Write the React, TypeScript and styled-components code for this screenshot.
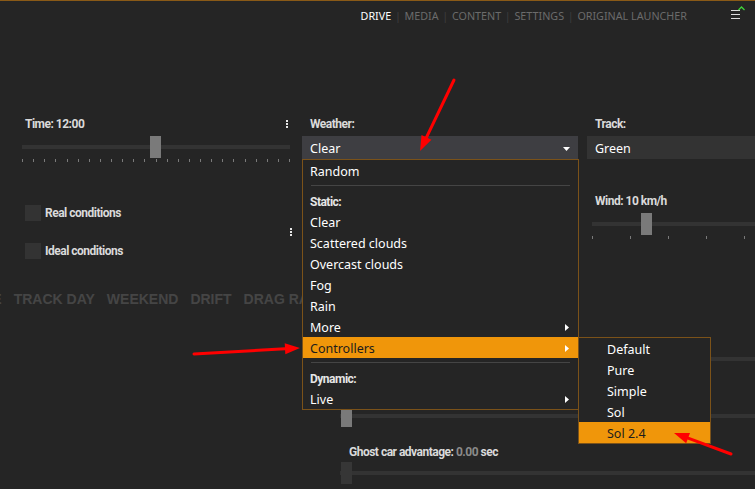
import React from "react";
import styled, { createGlobalStyle } from "styled-components";

const GlobalStyle = createGlobalStyle`
  html, body {
    margin: 0;
    padding: 0;
    background: #252525;
  }
  body {
    font-family: "Noto Sans", "Open Sans", sans-serif;
    color: #fff;
    overflow: hidden;
  }
`;

const Page = styled.div`
  position: relative;
  width: 755px;
  height: 489px;
  overflow: hidden;
  background: #252525;
  border-top: 1px solid #8a5a17;
  box-sizing: border-box;
`;

const TopBar = styled.header`
  display: flex;
  align-items: center;
  justify-content: flex-end;
  height: 30px;
  padding-right: 10px;
`;

const Nav = styled.nav`
  display: flex;
  align-items: center;
  gap: 3.7px;
  font-family: "Noto Sans", sans-serif;
  font-size: 10.75px;
  text-transform: uppercase;
`;

const NavItem = styled.span<{ $active?: boolean }>`
  color: ${p => (p.$active ? "#ffffff" : "#6b6b6b")};
`;

const NavSep = styled.span`
  color: #3e3e3e;
`;

const MenuIcon = styled.svg`
  margin-left: 44px;
  display: block;
`;

const TopSection = styled.section`
  display: grid;
  grid-template-columns: 280px 285px 1fr;
  padding: 81px 0 0 22px;
`;

const Column = styled.div<{ $pr: number }>`
  display: flex;
  flex-direction: column;
  padding-right: ${p => p.$pr}px;
  min-width: 0;
`;

const LabelRow = styled.div<{ $indent?: number }>`
  display: flex;
  align-items: center;
  justify-content: space-between;
  height: 24px;
  padding-left: ${p => p.$indent ?? 0}px;
`;

const Label = styled.span`
  font-family: Roboto, "Liberation Sans", sans-serif;
  font-weight: bold;
  font-size: 12px;
  letter-spacing: -0.5px;
  color: #dadada;
  white-space: nowrap;
`;

const Dim = styled.span`
  color: #8a8a8a;
`;

const Kebab = styled.span<{ $shift?: number }>`
  display: flex;
  flex-direction: column;
  gap: 1px;
  margin-right: ${p => p.$shift ?? 2}px;
  & > i {
    display: block;
    width: 2px;
    height: 2px;
    background: #e6e6e6;
  }
`;

const SliderBox = styled.div`
  position: relative;
  display: flex;
  align-items: center;
  height: 22px;
`;

const Track = styled.div`
  flex: 1;
  height: 4px;
  background: #333333;
`;

const Thumb = styled.div<{ $disabled?: boolean }>`
  position: absolute;
  top: 0;
  width: 11px;
  height: 22px;
  background: ${p => (p.$disabled ? "#363636" : "#7a7a7a")};
`;

const Ticks = styled.div<{ $gap?: number }>`
  display: flex;
  justify-content: ${p => (p.$gap ? "flex-start" : "space-between")};
  gap: ${p => (p.$gap ? `${p.$gap}px` : "0")};
  height: 4px;
  margin-top: 1px;
  overflow: hidden;
`;

const Tick = styled.span`
  flex: none;
  width: 1px;
  height: 3px;
  background: #7a7a7a;
`;

const Checks = styled.div`
  display: flex;
  align-items: center;
  justify-content: space-between;
  margin-top: 42px;
`;

const CheckList = styled.div`
  display: flex;
  flex-direction: column;
  gap: 22px;
  padding-left: 3px;
`;

const CheckRow = styled.label`
  display: flex;
  align-items: center;
  gap: 4px;
  height: 16px;
`;

const Box = styled.span`
  width: 16px;
  height: 16px;
  background: #333333;
`;

const Select = styled.div<{ $tone: string }>`
  position: relative;
  display: flex;
  align-items: center;
  justify-content: space-between;
  box-sizing: border-box;
  height: 23px;
  padding: 2px 8px 0 8px;
  background: ${p => p.$tone};
  font-size: 12.5px;
  color: #fff;
`;

const Dropdown = styled.div`
  position: absolute;
  top: 100%;
  left: 0;
  width: 277px;
  box-sizing: border-box;
  border: 1px solid #7b5219;
  background: #252525;
  z-index: 5;
`;

const Item = styled.div<{ $hot?: boolean; $pl?: number }>`
  position: relative;
  display: flex;
  align-items: center;
  justify-content: space-between;
  box-sizing: border-box;
  height: 21px;
  padding: 2px 9px 0 ${p => p.$pl ?? 7}px;
  font-size: 12.5px;
  color: ${p => (p.$hot ? "#1c1c1c" : "#ffffff")};
  background: ${p => (p.$hot ? "#f0960a" : "transparent")};
  white-space: nowrap;
`;

const Heading = styled(Item)`
  font-family: Roboto, "Liberation Sans", sans-serif;
  font-weight: bold;
  font-size: 12px;
  letter-spacing: -0.5px;
  color: #e6e6e6;
`;

const Separator = styled.div`
  height: 1px;
  margin: 4px 8px;
  background: #454545;
`;

const Submenu = styled.div`
  position: absolute;
  top: 0;
  left: 100%;
  width: 133px;
  box-sizing: border-box;
  border: 1px solid #7b5219;
  background: #252525;
`;

const TabsRow = styled.div`
  display: flex;
  gap: 12px;
  margin: 30px 0 0 -38px;
  height: 20px;
  align-items: center;
  font-family: "Liberation Sans", Arial, sans-serif;
  font-weight: bold;
  font-size: 14px;
  color: #454545;
  white-space: nowrap;
`;

const ModePanel = styled.section`
  display: flex;
  flex-direction: column;
  gap: 17px;
  padding: 21px 0 0 340px;
`;

const Field = styled.div`
  display: flex;
  flex-direction: column;
  gap: 2px;
`;

const FieldLabel = styled.div`
  height: 16px;
  display: flex;
  align-items: center;
  padding-left: 9px;
`;

const Overlay = styled.svg`
  position: absolute;
  inset: 0;
  pointer-events: none;
  z-index: 20;
`;

function Caret({ down }: { down?: boolean }) {
  return down ? (
    <svg width="7" height="4" viewBox="0 0 7 4">
      <polygon points="0,0 7,0 3.5,4" fill="#fff" />
    </svg>
  ) : (
    <svg width="4" height="7" viewBox="0 0 4 7">
      <polygon points="0,0 4,3.5 0,7" fill="#fff" />
    </svg>
  );
}

function Slider({ left, disabled }: { left: number; disabled?: boolean }) {
  return (
    <SliderBox>
      <Track />
      <Thumb $disabled={disabled} style={{ left }} />
    </SliderBox>
  );
}

function Arrow({ x1, y1, x2, y2 }: { x1: number; y1: number; x2: number; y2: number }) {
  const len = Math.hypot(x2 - x1, y2 - y1);
  const ux = (x2 - x1) / len;
  const uy = (y2 - y1) / len;
  const bx = x2 - ux * 15;
  const by = y2 - uy * 15;
  const px = -uy * 5.5;
  const py = ux * 5.5;
  return (
    <g>
      <line x1={x1} y1={y1} x2={bx} y2={by} stroke="#ff0000" strokeWidth={3} strokeLinecap="round" />
      <polygon points={`${x2},${y2} ${bx + px},${by + py} ${bx - px},${by - py}`} fill="#ff0000" />
    </g>
  );
}

const navItems = ["Drive", "Media", "Content", "Settings", "Original launcher"];
const staticWeather = ["Clear", "Scattered clouds", "Overcast clouds", "Fog", "Rain"];
const controllers = ["Default", "Pure", "Simple", "Sol", "Sol 2.4"];
const modes = ["Race", "Track day", "Weekend", "Drift", "Drag race", "Time attack", "Hotlap"];

export default function App() {
  return (
    <>
      <GlobalStyle />
      <Page>
        <TopBar>
          <Nav>
            {navItems.map((n, i) => (
              <React.Fragment key={n}>
                {i > 0 && <NavSep>|</NavSep>}
                <NavItem $active={i === 0}>{n}</NavItem>
              </React.Fragment>
            ))}
          </Nav>
          <MenuIcon width="14" height="20" viewBox="0 0 14 20">
            <rect x="0" y="4" width="9" height="1" fill="#dcdcdc" />
            <rect x="0" y="8" width="9" height="1" fill="#dcdcdc" />
            <rect x="0" y="12" width="9" height="1" fill="#dcdcdc" />
            <polyline points="7.5,4 10.5,1 13.5,4" fill="none" stroke="#3fd43a" strokeWidth="1.3" />
          </MenuIcon>
        </TopBar>

        <TopSection>
          <Column $pr={12}>
            <LabelRow $indent={3}>
              <Label>Time: 12:00</Label>
              <Kebab>
                <i />
                <i />
                <i />
              </Kebab>
            </LabelRow>
            <Slider left={128} />
            <Ticks>
              {Array.from({ length: 25 }, (_, i) => (
                <Tick key={i} />
              ))}
            </Ticks>
            <Checks>
              <CheckList>
                <CheckRow>
                  <Box />
                  <Label>Real conditions</Label>
                </CheckRow>
                <CheckRow>
                  <Box />
                  <Label>Ideal conditions</Label>
                </CheckRow>
              </CheckList>
              <Kebab $shift={-2}>
                <i />
                <i />
                <i />
              </Kebab>
            </Checks>
          </Column>

          <Column $pr={9}>
            <LabelRow $indent={8}>
              <Label>Weather:</Label>
            </LabelRow>
            <Select $tone="#3e3e42">
              <span>Clear</span>
              <Caret down />
              <Dropdown>
                <Item>Random</Item>
                <Separator />
                <Heading>Static:</Heading>
                {staticWeather.map(w => (
                  <Item key={w}>{w}</Item>
                ))}
                <Item>
                  More
                  <Caret />
                </Item>
                <Item $hot>
                  Controllers
                  <Caret />
                  <Submenu>
                    {controllers.map((c, i) => (
                      <Item key={c} $pl={28} $hot={i === controllers.length - 1}>
                        {c}
                      </Item>
                    ))}
                  </Submenu>
                </Item>
                <Separator />
                <Heading>Dynamic:</Heading>
                <Item>
                  Live
                  <Caret />
                </Item>
              </Dropdown>
            </Select>
          </Column>

          <Column $pr={0}>
            <LabelRow $indent={8}>
              <Label>Track:</Label>
            </LabelRow>
            <Select $tone="#333333">
              <span>Green</span>
            </Select>
            <LabelRow $indent={8} style={{ marginTop: 30 }}>
              <Label>Wind: 10 km/h</Label>
            </LabelRow>
            <div style={{ paddingLeft: 5 }}>
              <Slider left={49} />
              <Ticks $gap={37}>
                {Array.from({ length: 6 }, (_, i) => (
                  <Tick key={i} />
                ))}
              </Ticks>
            </div>
          </Column>
        </TopSection>

        <TabsRow>
          {modes.map(m => (
            <span key={m}>{m.toUpperCase()}</span>
          ))}
        </TabsRow>

        <ModePanel>
          <Field>
            <FieldLabel>
              <Label>Laps:</Label>
            </FieldLabel>
            <Slider left={60} />
          </Field>
          <Field>
            <FieldLabel>
              <Label>Start:</Label>
            </FieldLabel>
            <Slider left={1} />
          </Field>
          <Field>
            <FieldLabel>
              <Label>
                Ghost car advantage: <Dim>0.00</Dim> sec
              </Label>
            </FieldLabel>
            <Slider left={1} disabled />
          </Field>
        </ModePanel>

        <Overlay width="755" height="489" viewBox="0 0 755 489">
          <Arrow x1={454} y1={79} x2={420} y2={150} />
          <Arrow x1={194} y1={353} x2={300} y2={347} />
          <Arrow x1={731} y1={453} x2={674} y2={432} />
        </Overlay>
      </Page>
    </>
  );
}
